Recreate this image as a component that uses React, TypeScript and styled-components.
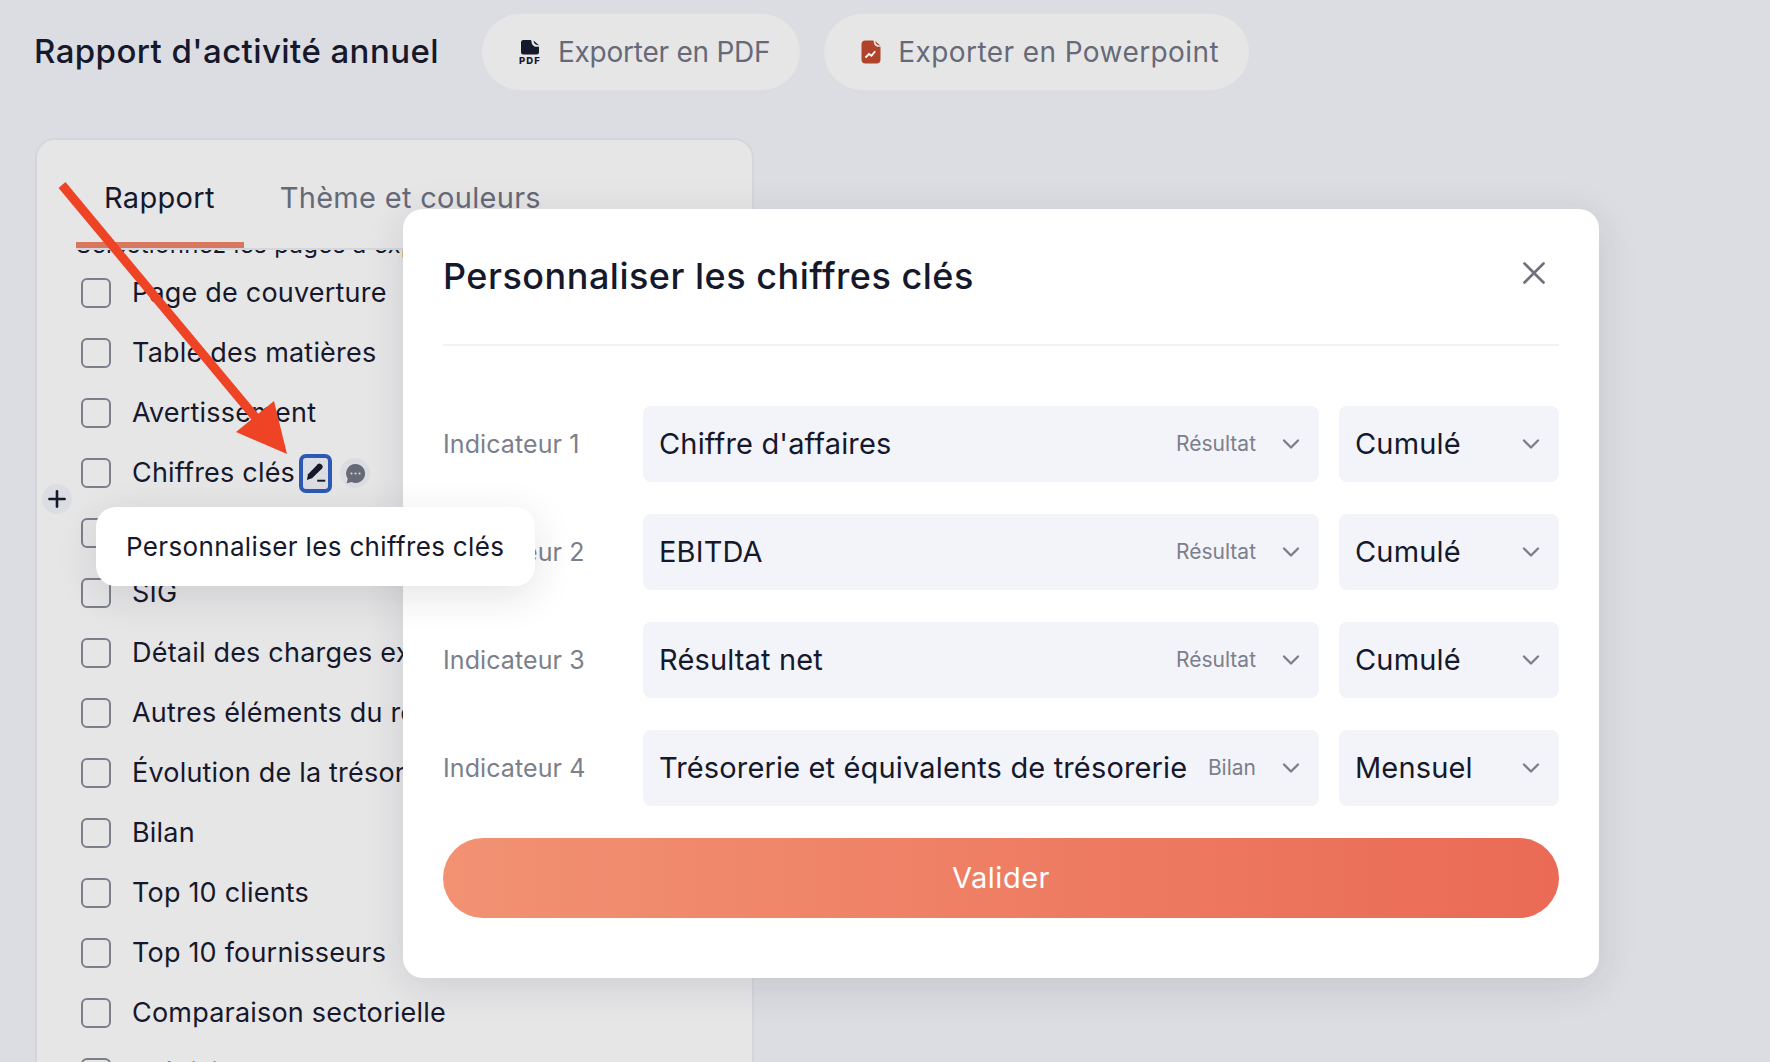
import React from 'react';
import styled, { createGlobalStyle } from 'styled-components';
import { ChevronDown, Plus, X } from 'lucide-react';

const GlobalStyle = createGlobalStyle`
  html, body {
    margin: 0;
    width: 1770px;
    height: 1062px;
    overflow: hidden;
    background: #dcdde2;
    font-family: Inter, "Noto Sans", sans-serif;
    color: #16182b;
  }
  * { box-sizing: border-box; }
`;

const Page = styled.div`
  position: relative;
  width: 1770px;
  height: 1062px;
  overflow: hidden;
  padding: 14px 0 0 34px;
`;

const Header = styled.header`
  display: flex;
  align-items: center;
  height: 76px;
`;

const PageTitle = styled.h1`
  width: 448px;
  margin: 0 0 2px;
  font-size: 33px;
  font-weight: 500;
  letter-spacing: 0.42px;
`;

const ExportButton = styled.button<{ $tracking: number }>`
  display: flex;
  align-items: center;
  gap: 17px;
  height: 76px;
  margin-right: 24px;
  padding: 0 30px 0 37px;
  border: 0;
  border-radius: 38px;
  background: #e6e6e7;
  color: #666a78;
  font: inherit;
  font-size: 28px;
  letter-spacing: ${(p) => p.$tracking}px;
`;

const Panel = styled.section`
  width: 719px;
  height: 1000px;
  margin: 48px 0 0 1px;
  padding-top: 32px;
  background: #e6e6e7;
  border: 2px solid #d5d6db;
  border-radius: 20px;
`;

const Tabs = styled.div`
  display: flex;
  gap: 8px;
  height: 78px;
  margin: 0 0 0 39px;
  border-bottom: 2px solid #d5d6db;
`;

const Tab = styled.div<{ $active?: boolean }>`
  height: 76px;
  padding: 8px 29px 0 28px;
  font-size: 29px;
  letter-spacing: 0.3px;
  color: ${(p) => (p.$active ? '#16182b' : '#666a78')};
  border-bottom: ${(p) => (p.$active ? '6px solid #d8775f' : '0')};
`;

const Scroller = styled.div`
  height: 820px;
  overflow: hidden;
  padding-left: 44px;
`;

const Intro = styled.p`
  margin: -20px 0 0 -5px;
  height: 33px;
  font-size: 24px;
  line-height: 30px;
  letter-spacing: 0.35px;
  white-space: nowrap;
`;

const Row = styled.div`
  position: relative;
  display: flex;
  align-items: center;
  height: 60px;
  font-size: 27px;
  letter-spacing: 0.2px;
`;

const RowLabel = styled.span`
  padding-bottom: 2px;
`;

const Checkbox = styled.span`
  flex: none;
  width: 30px;
  height: 30px;
  margin-right: 21px;
  border: 2px solid #7c7f8a;
  border-radius: 6px;
`;

const EditButton = styled.span`
  display: flex;
  align-items: center;
  justify-content: center;
  width: 33px;
  height: 39px;
  margin-left: 4px;
  background: #dcdde2;
  border: 4px solid #2b59b4;
  border-radius: 7px;
`;

const CommentButton = styled.span`
  display: flex;
  align-items: center;
  justify-content: center;
  width: 30px;
  height: 30px;
  margin-left: 8px;
  background: #dcdde2;
  border-radius: 50%;
`;

const InsertButton = styled.span`
  position: absolute;
  left: -39px;
  bottom: -11px;
  display: flex;
  align-items: center;
  justify-content: center;
  width: 30px;
  height: 30px;
  background: #dcdde2;
  border-radius: 50%;
  color: #16182b;
`;

const Tooltip = styled.div`
  position: absolute;
  left: 96px;
  top: 507px;
  width: 439px;
  height: 79px;
  padding: 0 0 1px 30px;
  display: flex;
  align-items: center;
  background: #fff;
  border-radius: 20px;
  font-size: 26px;
  letter-spacing: 0.35px;
  box-shadow: 0 10px 40px rgba(30, 32, 50, 0.12);
  white-space: nowrap;
`;

const Modal = styled.div`
  position: absolute;
  left: 403px;
  top: 209px;
  width: 1196px;
  height: 769px;
  padding: 0 40px;
  background: #fff;
  border-radius: 20px;
  box-shadow: 0 8px 40px rgba(30, 32, 50, 0.12);
`;

const ModalHeader = styled.div`
  display: flex;
  align-items: center;
  justify-content: space-between;
  height: 137px;
  padding-right: 6px;
  border-bottom: 2px solid #f1f2f5;
  color: #6f727c;
`;

const CloseIcon = styled(X)`
  margin-bottom: 8px;
`;

const ModalTitle = styled.h2`
  margin: 0 0 1px;
  color: #16182b;
  font-size: 36px;
  font-weight: 500;
  letter-spacing: 0.5px;
`;

const Indicators = styled.div`
  display: flex;
  flex-direction: column;
  gap: 32px;
  margin-top: 60px;
`;

const IndicatorRow = styled.div`
  display: grid;
  grid-template-columns: 180px 676px 220px;
  column-gap: 20px;
  align-items: center;
`;

const IndicatorLabel = styled.span`
  padding-bottom: 1px;
  color: #7c7f8a;
  font-size: 25px;
  letter-spacing: 0.1px;
`;

const Select = styled.div`
  display: flex;
  align-items: center;
  height: 76px;
  padding: 0 14px 0 16px;
  background: #f3f4f9;
  border-radius: 8px;
  font-size: 29px;
  letter-spacing: 0.15px;
  white-space: nowrap;
`;

const Value = styled.span`
  flex: 1;
  padding-bottom: 2px;
`;

const Category = styled.span`
  margin-right: 21px;
  padding-bottom: 2px;
  color: #7c7f8a;
  font-size: 21px;
  letter-spacing: 0;
`;

const SubmitButton = styled.button`
  display: block;
  width: 1116px;
  height: 80px;
  margin-top: 32px;
  padding-bottom: 3px;
  border: 0;
  border-radius: 40px;
  background: linear-gradient(90deg, #f29273, #ea6a55);
  color: #fff;
  font: inherit;
  font-size: 29px;
  letter-spacing: 0.5px;
`;

const ArrowLayer = styled.svg`
  position: absolute;
  left: 0;
  top: 0;
  pointer-events: none;
`;

const reports = [
  'Page de couverture',
  'Table des matières',
  'Avertissement',
  'Chiffres clés',
  'Compte de résultat',
  'SIG',
  'Détail des charges externes',
  'Autres éléments du résultat',
  'Évolution de la trésorerie',
  'Bilan',
  'Top 10 clients',
  'Top 10 fournisseurs',
  'Comparaison sectorielle',
  'Prévisionnel',
];

const indicators = [
  { name: "Chiffre d'affaires", category: 'Résultat', period: 'Cumulé' },
  { name: 'EBITDA', category: 'Résultat', period: 'Cumulé' },
  { name: 'Résultat net', category: 'Résultat', period: 'Cumulé' },
  { name: 'Trésorerie et équivalents de trésorerie', category: 'Bilan', period: 'Mensuel' },
];

const PdfIcon = () => (
  <svg width="22" height="24" viewBox="0 0 22 24">
    <path d="M4.5 0h6.5c1 0 1.5.6 1.5 1.5 0 3 2.2 5.3 5.3 5.3h2.2V12a2.5 2.5 0 0 1-2.5 2.5h-13A2.5 2.5 0 0 1 2 12V2.5A2.5 2.5 0 0 1 4.5 0z" fill="#16182b" />
    <path d="M14.5 0.6l5.4 4.6c-3 .2-5.2-1.6-5.4-4.6z" fill="#16182b" />
    <text x="11" y="23.5" textAnchor="middle" fontSize="9.5" fontWeight="800" letterSpacing="1.2" fill="#16182b">
      PDF
    </text>
  </svg>
);

const SlidesIcon = () => (
  <svg width="20" height="24" viewBox="0 0 20 24">
    <path d="M4.5 0.5h7c.9 0 1.3.5 1.3 1.3 0 3 2 5 4.8 5h1.9V19.5a4 4 0 0 1-4 4H4.5a4 4 0 0 1-4-4V4.5a4 4 0 0 1 4-4z" fill="#b0442a" />
    <path d="M14.2 1l5 4.4c-2.8.2-4.8-1.5-5-4.4z" fill="#b0442a" />
    <path d="M4.5 17.5l3.5-3.5 2.5 1.8 3.7-4.6" fill="none" stroke="#fff" strokeWidth="1.8" />
  </svg>
);

const PencilIcon = () => (
  <svg width="23" height="24" viewBox="1.5 2.5 20 20.8">
    <path d="M13.5 5.3a2 2 0 0 1 2.8 0l.9.9a2 2 0 0 1 0 2.8L8.5 17.5 4 19l1-5z" fill="#16182b" />
    <path d="M13 19.6h7" stroke="#16182b" strokeWidth="1.7" />
  </svg>
);

const CommentIcon = () => (
  <svg width="21" height="21" viewBox="0 0 20 20">
    <path d="M10 1a9 9 0 1 1-3.6 17.2L1.6 19.4l1-4.4A9 9 0 0 1 10 1z" fill="#666a77" />
    <circle cx="6.2" cy="10" r="1" fill="#dcdde2" />
    <circle cx="10" cy="10" r="1" fill="#dcdde2" />
    <circle cx="13.8" cy="10" r="1" fill="#dcdde2" />
  </svg>
);

const App: React.FC = () => {
  return (
    <Page>
      <GlobalStyle />
      <Header>
        <PageTitle>Rapport d'activité annuel</PageTitle>
        <ExportButton $tracking={-0.25}>
          <PdfIcon />
          Exporter en PDF
        </ExportButton>
        <ExportButton $tracking={0.42}>
          <SlidesIcon />
          Exporter en Powerpoint
        </ExportButton>
      </Header>

      <Panel>
        <Tabs>
          <Tab $active>Rapport</Tab>
          <Tab>Thème et couleurs</Tab>
        </Tabs>
        <Scroller>
          <Intro>Sélectionnez les pages à exporter</Intro>
          {reports.map((report) => (
            <Row key={report}>
              <Checkbox />
              <RowLabel>{report}</RowLabel>
              {report === 'Chiffres clés' && (
                <>
                  <EditButton>
                    <PencilIcon />
                  </EditButton>
                  <CommentButton>
                    <CommentIcon />
                  </CommentButton>
                  <InsertButton>
                    <Plus size={26} strokeWidth={2.4} />
                  </InsertButton>
                </>
              )}
            </Row>
          ))}
        </Scroller>
      </Panel>

      <Modal>
        <ModalHeader>
          <ModalTitle>Personnaliser les chiffres clés</ModalTitle>
          <CloseIcon size={38} strokeWidth={1.7} />
        </ModalHeader>
        <Indicators>
          {indicators.map((indicator, i) => (
            <IndicatorRow key={indicator.name}>
              <IndicatorLabel>Indicateur {i + 1}</IndicatorLabel>
              <Select>
                <Value>{indicator.name}</Value>
                <Category>{indicator.category}</Category>
                <ChevronDown size={28} strokeWidth={2} color="#7c7f8a" />
              </Select>
              <Select>
                <Value>{indicator.period}</Value>
                <ChevronDown size={28} strokeWidth={2} color="#7c7f8a" />
              </Select>
            </IndicatorRow>
          ))}
        </Indicators>
        <SubmitButton>Valider</SubmitButton>
      </Modal>

      <Tooltip>Personnaliser les chiffres clés</Tooltip>

      <ArrowLayer width="320" height="480" viewBox="0 0 320 480">
        <line x1="62" y1="185" x2="256" y2="418" stroke="#ee4325" strokeWidth="9" />
        <polygon points="287,454 236,432 274,401" fill="#ee4325" />
      </ArrowLayer>
    </Page>
  );
};

export default App;
